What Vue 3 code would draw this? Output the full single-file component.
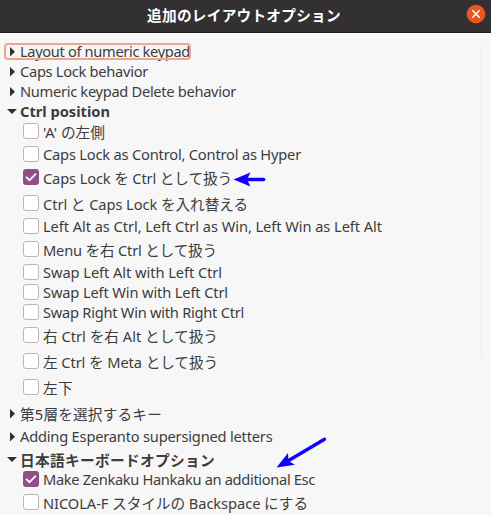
<script setup>
import { onMounted, ref } from 'vue'

// kind: group | option; height: row pitch; shift: text baseline nudge; width: label width
const rows = [
  { kind: 'group', text: 'Layout of numeric keypad', height: 20, width: 170, focused: true },
  { kind: 'group', text: 'Caps Lock behavior', height: 20, width: 128 },
  { kind: 'group', text: 'Numeric keypad Delete behavior', height: 20, width: 216 },
  { kind: 'group', text: 'Ctrl position', height: 20, width: 90, open: true },
  { kind: 'option', text: "'A' の左側", height: 23, width: 62, shift: 1 },
  { kind: 'option', text: 'Caps Lock as Control, Control as Hyper', height: 23, width: 258 },
  { kind: 'option', text: 'Caps Lock を Ctrl として扱う', height: 26, width: 189, shift: 1, checked: true },
  { kind: 'option', text: 'Ctrl と Caps Lock を入れ替える', height: 23, width: 205, shift: 1 },
  { kind: 'option', text: 'Left Alt as Ctrl, Left Ctrl as Win, Left Win as Left Alt', height: 23, width: 339 },
  { kind: 'option', text: 'Menu を右 Ctrl として扱う', height: 23, width: 174, shift: 1 },
  { kind: 'option', text: 'Swap Left Alt with Left Ctrl', height: 20, width: 179 },
  { kind: 'option', text: 'Swap Left Win with Left Ctrl', height: 20, width: 185 },
  { kind: 'option', text: 'Swap Right Win with Right Ctrl', height: 23, width: 201 },
  { kind: 'option', text: '右 Ctrl を右 Alt として扱う', height: 26, width: 175, shift: 1 },
  { kind: 'option', text: '左 Ctrl を Meta として扱う', height: 26, width: 175, shift: 1 },
  { kind: 'option', text: '左下', height: 26, width: 30, shift: 1 },
  { kind: 'group', text: '第5層を選択するキー', height: 23, width: 142, shift: 1 },
  { kind: 'group', text: 'Adding Esperanto supersigned letters', height: 23, width: 252.5 },
  { kind: 'group', text: '日本語キーボードオプション', height: 20, width: 195, open: true, shift: 1 },
  { kind: 'option', text: 'Make Zenkaku Hankaku an additional Esc', height: 23, width: 272, checked: true },
  { kind: 'option', text: 'NICOLA-F スタイルの Backspace にする', height: 23, width: 265, shift: 1 }
]

const labels = ref([])
const spacing = ref(rows.map(() => 0))

onMounted(() => {
  spacing.value = labels.value.map((el, i) =>
    (rows[i].width - el.getBoundingClientRect().width) / rows[i].text.length
  )
})
</script>

<template>
  <div class="window">
    <header class="titlebar">
      <h1 class="title">追加のレイアウトオプション</h1>
      <button class="close" aria-label="閉じる">
        <svg width="20" height="20" viewBox="0 0 20 20">
          <circle cx="10" cy="10" r="9.3" fill="#e95420" />
          <path d="M6.3 6.3l7.4 7.4M13.7 6.3l-7.4 7.4" stroke="#fff" stroke-width="1.5" fill="none" />
        </svg>
      </button>
    </header>
    <main class="content">
      <div
        v-for="(row, i) in rows"
        :key="i"
        class="row"
        :class="[row.kind, { open: row.open, focused: row.focused, low: row.shift }]"
        :style="{ height: row.height + 'px' }"
      >
        <svg v-if="row.kind === 'group'" class="arrow" width="10" height="10" viewBox="0 0 10 10">
          <path :d="row.open ? 'M0 3H10L5 8Z' : 'M3 0L8 4.7L3 9.4Z'" fill="#2c3033" />
        </svg>
        <span v-else class="box" :class="{ checked: row.checked }">
          <svg v-if="row.checked" width="16" height="16" viewBox="0 0 16 16">
            <path d="M3 7.8L6.5 11.2L13 4.6" fill="none" stroke="#fff" stroke-width="1.8" />
          </svg>
        </span>
        <span
          :ref="el => (labels[i] = el)"
          class="label"
          :style="{ letterSpacing: spacing[i] + 'px' }"
        >{{ row.text }}</span>
      </div>
      <div class="scroll"></div>
    </main>
    <svg class="marks" width="491" height="515" viewBox="0 0 491 515">
      <g fill="#1200ff" stroke="#1200ff">
        <path d="M246 179.5H263.7" stroke-width="3.4" stroke-linecap="round" />
        <path d="M233.5 179.5L250.5 172.5L247 179.5L250.5 186.5Z" stroke="none" />
        <path d="M287 461.5L324.5 439.2" stroke-width="3.4" stroke-linecap="round" />
        <path d="M276.5 467.5L288 453L288.5 461L295 464.7Z" stroke="none" />
      </g>
    </svg>
  </div>
</template>

<style>
body { margin: 0; overflow: hidden; }
</style>

<style scoped>
.window {
  position: relative;
  width: 491px;
  height: 515px;
  overflow: hidden;
  background: #f7f7f7;
  color: #3d3d3d;
  font: 14.67px/20px "Noto Sans", "Noto Sans CJK JP", sans-serif;
}
.titlebar {
  box-sizing: border-box;
  height: 33px;
  display: grid;
  grid-template-columns: 28px 1fr 30px;
  background: #333031;
  border-bottom: 1px solid #1d1b1c;
}
.title {
  grid-column: 2;
  margin: 0;
  padding: 5px 1px 0 0;
  text-align: center;
  color: #fff;
  font: 700 14.67px/20px "Noto Sans", "Noto Sans CJK JP", sans-serif;
  letter-spacing: 0.25px;
}
.close {
  width: 20px;
  height: 20px;
  margin: 4px 0 0 5px;
  padding: 0;
  border: 0;
  background: none;
}
.close svg { display: block; }
.content { padding: 8px 0 0 4px; }
.row {
  display: flex;
  align-items: flex-start;
  box-sizing: border-box;
}
.label { white-space: pre; }
.low .label { padding-top: 1px; }
.arrow {
  flex: none;
  margin: 6px 3px 0 3px;
}
.open { font-weight: 700; }
.open .arrow { margin-top: 5px; }
.focused {
  width: 187px;
  position: relative;
}
.focused::after {
  content: "";
  position: absolute;
  inset: 2px 0 1px 0;
  box-sizing: border-box;
  border: 2px solid #f3a58b;
  border-radius: 4px;
}
.box {
  flex: none;
  box-sizing: border-box;
  width: 16px;
  height: 16px;
  margin: 2px 4px 0 19px;
  border: 1px solid #b9b6b4;
  border-radius: 3px;
  background: #fff;
}
.box.checked {
  border: 0;
  background: #924d8b;
}
.box svg { display: block; }
.scroll {
  position: absolute;
  left: 480px;
  top: 46px;
  width: 3px;
  height: 312px;
  border-radius: 2px;
  background: #f2f2f2;
}
.marks {
  position: absolute;
  left: 0;
  top: 0;
  pointer-events: none;
}
</style>
